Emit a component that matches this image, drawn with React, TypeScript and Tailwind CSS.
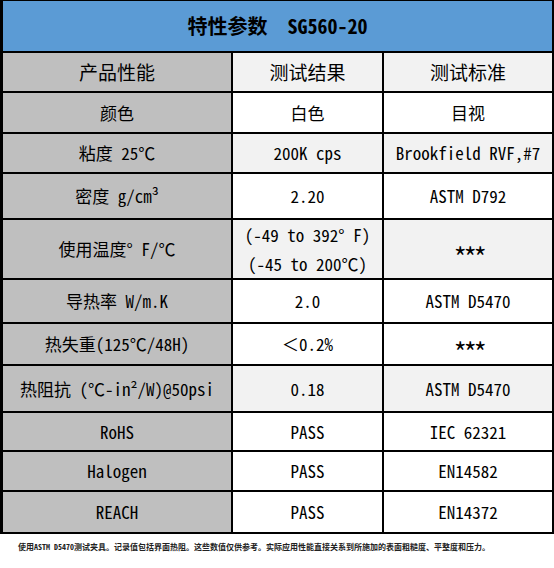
const font = '"Noto Sans Mono CJK SC", "Noto Sans CJK SC", "Liberation Mono", monospace'

type Row = {
  name: string
  result: React.ReactNode
  standard: React.ReactNode
  shade?: boolean
}

const stars = (
  <span className="text-[27px] leading-none tracking-[-3.5px] pl-[1px] pt-[14px]">***</span>
)

const rows: Row[] = [
  { name: '颜色', result: '白色', standard: '目视' },
  { name: '粘度 25℃', result: '200K cps', standard: 'Brookfield RVF,#7', shade: true },
  { name: '密度 g/cm³', result: '2.20', standard: 'ASTM D792' },
  {
    name: '使用温度° F/℃',
    result: (
      <div className="flex flex-col items-center gap-[4px]">
        <span>(-49 to 392° F)</span>
        <span>(-45 to 200℃)</span>
      </div>
    ),
    standard: stars,
    shade: true,
  },
  { name: '导热率 W/m.K', result: '2.0', standard: 'ASTM D5470' },
  { name: '热失重(125℃/48H)', result: '＜0.2%', standard: stars },
  { name: '热阻抗 (℃-in²/W)@50psi', result: '0.18', standard: 'ASTM D5470', shade: true },
  { name: 'RoHS', result: 'PASS', standard: 'IEC 62321' },
  { name: 'Halogen', result: 'PASS', standard: 'EN14582' },
  { name: 'REACH', result: 'PASS', standard: 'EN14372' },
]

export default function App() {
  return (
    <div className="w-[554px] h-[568px] bg-white text-black" style={{ fontFamily: font }}>
      <div className="grid grid-cols-[228px_149px_168px] grid-rows-[50px_38px_39px_38px_44px_58px_42px_40px_45px_37px_38px_40px] gap-[2px] bg-black border-t-[1px] border-l-[3px] border-r-[2px] border-b-[2px] border-black">
        <div className="col-span-3 flex items-center justify-center bg-[#5b9bd5] text-[20px] font-bold whitespace-pre">
          特性参数  SG560-20
        </div>

        <div className="flex items-center justify-center bg-[#bfbfbf] text-[19px]">产品性能</div>
        <div className="flex items-center justify-center bg-[#f2f2f2] text-[19px]">测试结果</div>
        <div className="flex items-center justify-center bg-[#f2f2f2] text-[19px]">测试标准</div>

        {rows.map((r) => (
          <Cells key={r.name} row={r} />
        ))}
      </div>
      <p className="pl-[18px] pt-[8px] text-[8px] leading-[10px] font-bold text-[#222]">
        使用ASTM D5470测试夹具。记录值包括界面热阻。这些数值仅供参考。实际应用性能直接关系到所施加的表面粗糙度、平整度和压力。
      </p>
    </div>
  )
}

function Cells({ row }: { row: Row }) {
  const bg = row.shade ? 'bg-[#f2f2f2]' : 'bg-white'
  return (
    <>
      <div className="flex items-center justify-center bg-[#bfbfbf] text-[17px] whitespace-pre">{row.name}</div>
      <div className={`flex items-center justify-center ${bg} text-[17px] whitespace-pre`}>{row.result}</div>
      <div className={`flex items-center justify-center ${bg} text-[17px] whitespace-pre`}>{row.standard}</div>
    </>
  )
}
